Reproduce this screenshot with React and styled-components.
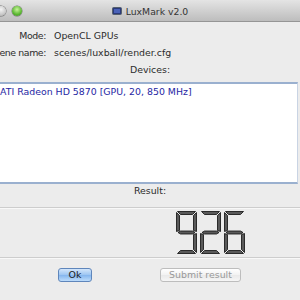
import React from "react";
import styled, { createGlobalStyle } from "styled-components";

const GlobalStyle = createGlobalStyle`
  html, body {
    margin: 0;
    padding: 0;
    width: 300px;
    height: 300px;
    overflow: hidden;
    background: #ececec;
  }
  body {
    font-family: "DejaVu Sans", "Liberation Sans", sans-serif;
    font-size: 9.4px;
    color: #2b2b2b;
  }
`;

const Window = styled.div`
  width: 300px;
  height: 300px;
  background: #ececec;
  display: flex;
  flex-direction: column;
  overflow: hidden;
`;

const TitleBar = styled.div`
  height: 21px;
  flex: 0 0 21px;
  background: linear-gradient(#e4e4e4, #bdbdbd);
  border-bottom: 1px solid #959595;
  display: flex;
  align-items: center;
  position: relative;
`;

const Lights = styled.div`
  display: flex;
  gap: 6px;
  margin-left: -4px;
`;

const Light = styled.span`
  width: 10px;
  height: 10px;
  border-radius: 50%;
  background: ${(p) =>
    p.color === "green"
      ? "radial-gradient(circle at 50% 35%, #c8f59a, #59b630 60%, #3a8a1c)"
      : "radial-gradient(circle at 50% 35%, #f4f4f4, #c9c9c9 60%, #9c9c9c)"};
  box-shadow: 0 0 0 0.5px #6f6f6f;
`;

const Title = styled.div`
  position: absolute;
  left: 0;
  right: 0;
  top: 0;
  bottom: 0;
  display: flex;
  align-items: center;
  justify-content: center;
  gap: 4px;
  color: #333;
  font-size: 9.3px;
  padding-top: 1px;
`;

const Form = styled.div`
  padding-top: 5px;
  display: grid;
  grid-template-columns: 46px 1fr;
  column-gap: 8px;
`;

const Label = styled.div`
  display: flex;
  justify-content: flex-end;
  white-space: nowrap;
  line-height: 17px;
  letter-spacing: -0.4px;
`;

const Value = styled.div`
  line-height: 17px;
  white-space: nowrap;
`;

const Caption = styled.div`
  text-align: center;
  line-height: ${(p) => p.lh || "17px"};
`;

const DeviceList = styled.div`
  margin: 4px 2px 0 -4px;
  height: 98px;
  background: #fff;
  border-top: 2px solid #9ab0cf;
  border-bottom: 2px solid #9ab0cf;
  border-right: 1px solid #c9d4e4;
  padding-left: 4px;
`;

const Device = styled.div`
  color: #2626a3;
  line-height: 14px;
  padding-top: 1px;
  white-space: nowrap;
`;

const Groove = styled.div`
  height: 1px;
  background: #cdcdcd;
  border-bottom: 1px solid #f8f8f8;
  margin-top: ${(p) => p.mt || "0px"};
`;

const Lcd = styled.div`
  display: flex;
  justify-content: flex-end;
  gap: 3px;
  padding: 2px 55px 3px 0;
`;

const Buttons = styled.div`
  display: flex;
  align-items: center;
  gap: 68px;
  padding-left: 58px;
  margin-top: 9px;
`;

const Button = styled.button`
  font-family: inherit;
  font-size: 9.4px;
  height: 14px;
  padding: 0;
  width: ${(p) => p.w}px;
  border-radius: 3px;
  line-height: 12px;
  border: 1px solid ${(p) => (p.primary ? "#5f86bb" : "#bdbdbd")};
  background: ${(p) =>
    p.primary
      ? "linear-gradient(#d3e6fb, #9cc5f2 50%, #84b5ee 51%, #bcdcfb)"
      : "linear-gradient(#ffffff, #f2f2f2 50%, #e9e9e9 51%, #f6f6f6)"};
  color: ${(p) => (p.primary ? "#1a1a1a" : "#999")};
`;

const W = 20;
const H = 42;
const T = 3;
const SEGS = {
  a: [[1, 0], [W - 1, 0], [W - 1 - T, T], [1 + T, T]],
  d: [[1 + T, H - T], [W - 1 - T, H - T], [W - 1, H], [1, H]],
  g: [[1.5, H / 2], [1 + T, H / 2 - T / 2], [W - 1 - T, H / 2 - T / 2], [W - 1.5, H / 2], [W - 1 - T, H / 2 + T / 2], [1 + T, H / 2 + T / 2]],
  f: [[0, 1], [T, 1 + T], [T, H / 2 - T / 2 - 0.5], [0, H / 2 - 1]],
  b: [[W, 1], [W, H / 2 - 1], [W - T, H / 2 - T / 2 - 0.5], [W - T, 1 + T]],
  e: [[0, H / 2 + 1], [T, H / 2 + T / 2 + 0.5], [T, H - 1 - T], [0, H - 1]],
  c: [[W, H / 2 + 1], [W, H - 1], [W - T, H - 1 - T], [W - T, H / 2 + T / 2 + 0.5]],
};
const DIGITS = {
  9: "abcdfg",
  2: "abged",
  6: "afgecd",
};

const Digit = ({ value }) => (
  <svg width={W + 1} height={H + 1} viewBox={`-0.5 -0.5 ${W + 1} ${H + 1}`}>
    {DIGITS[value].split("").map((s) => (
      <polygon
        key={s}
        points={SEGS[s].map((p) => p.join(",")).join(" ")}
        fill="#5a5a5a"
        stroke="#0c0c0c"
        strokeWidth="0.8"
        strokeLinejoin="round"
      />
    ))}
  </svg>
);

const AppIcon = () => (
  <svg width="10" height="8" viewBox="0 0 10 8">
    <rect x="0.5" y="0.5" width="9" height="7" rx="1" fill="#2b3a7a" stroke="#55606e" />
    <rect x="2" y="2" width="6" height="4" fill="#4a62b8" />
  </svg>
);

const App = () => {
  return (
    <>
      <GlobalStyle />
      <Window>
        <TitleBar>
          <Lights>
            <Light />
            <Light color="green" />
          </Lights>
          <Title>
            <AppIcon />
            <span>LuxMark v2.0</span>
          </Title>
        </TitleBar>
        <Form>
          <Label>Mode:</Label>
          <Value>OpenCL GPUs</Value>
          <Label>Scene name:</Label>
          <Value>scenes/luxball/render.cfg</Value>
        </Form>
        <Caption>Devices:</Caption>
        <DeviceList>
          <Device>ATI Radeon HD 5870 [GPU, 20, 850 MHz]</Device>
        </DeviceList>
        <Caption lh="13px">Result:</Caption>
        <Groove mt="10px" />
        <Lcd>
          <Digit value={9} />
          <Digit value={2} />
          <Digit value={6} />
        </Lcd>
        <Groove />
        <Buttons>
          <Button primary w={34}>Ok</Button>
          <Button w={81} disabled>Submit result</Button>
        </Buttons>
      </Window>
    </>
  );
};

export default App;
